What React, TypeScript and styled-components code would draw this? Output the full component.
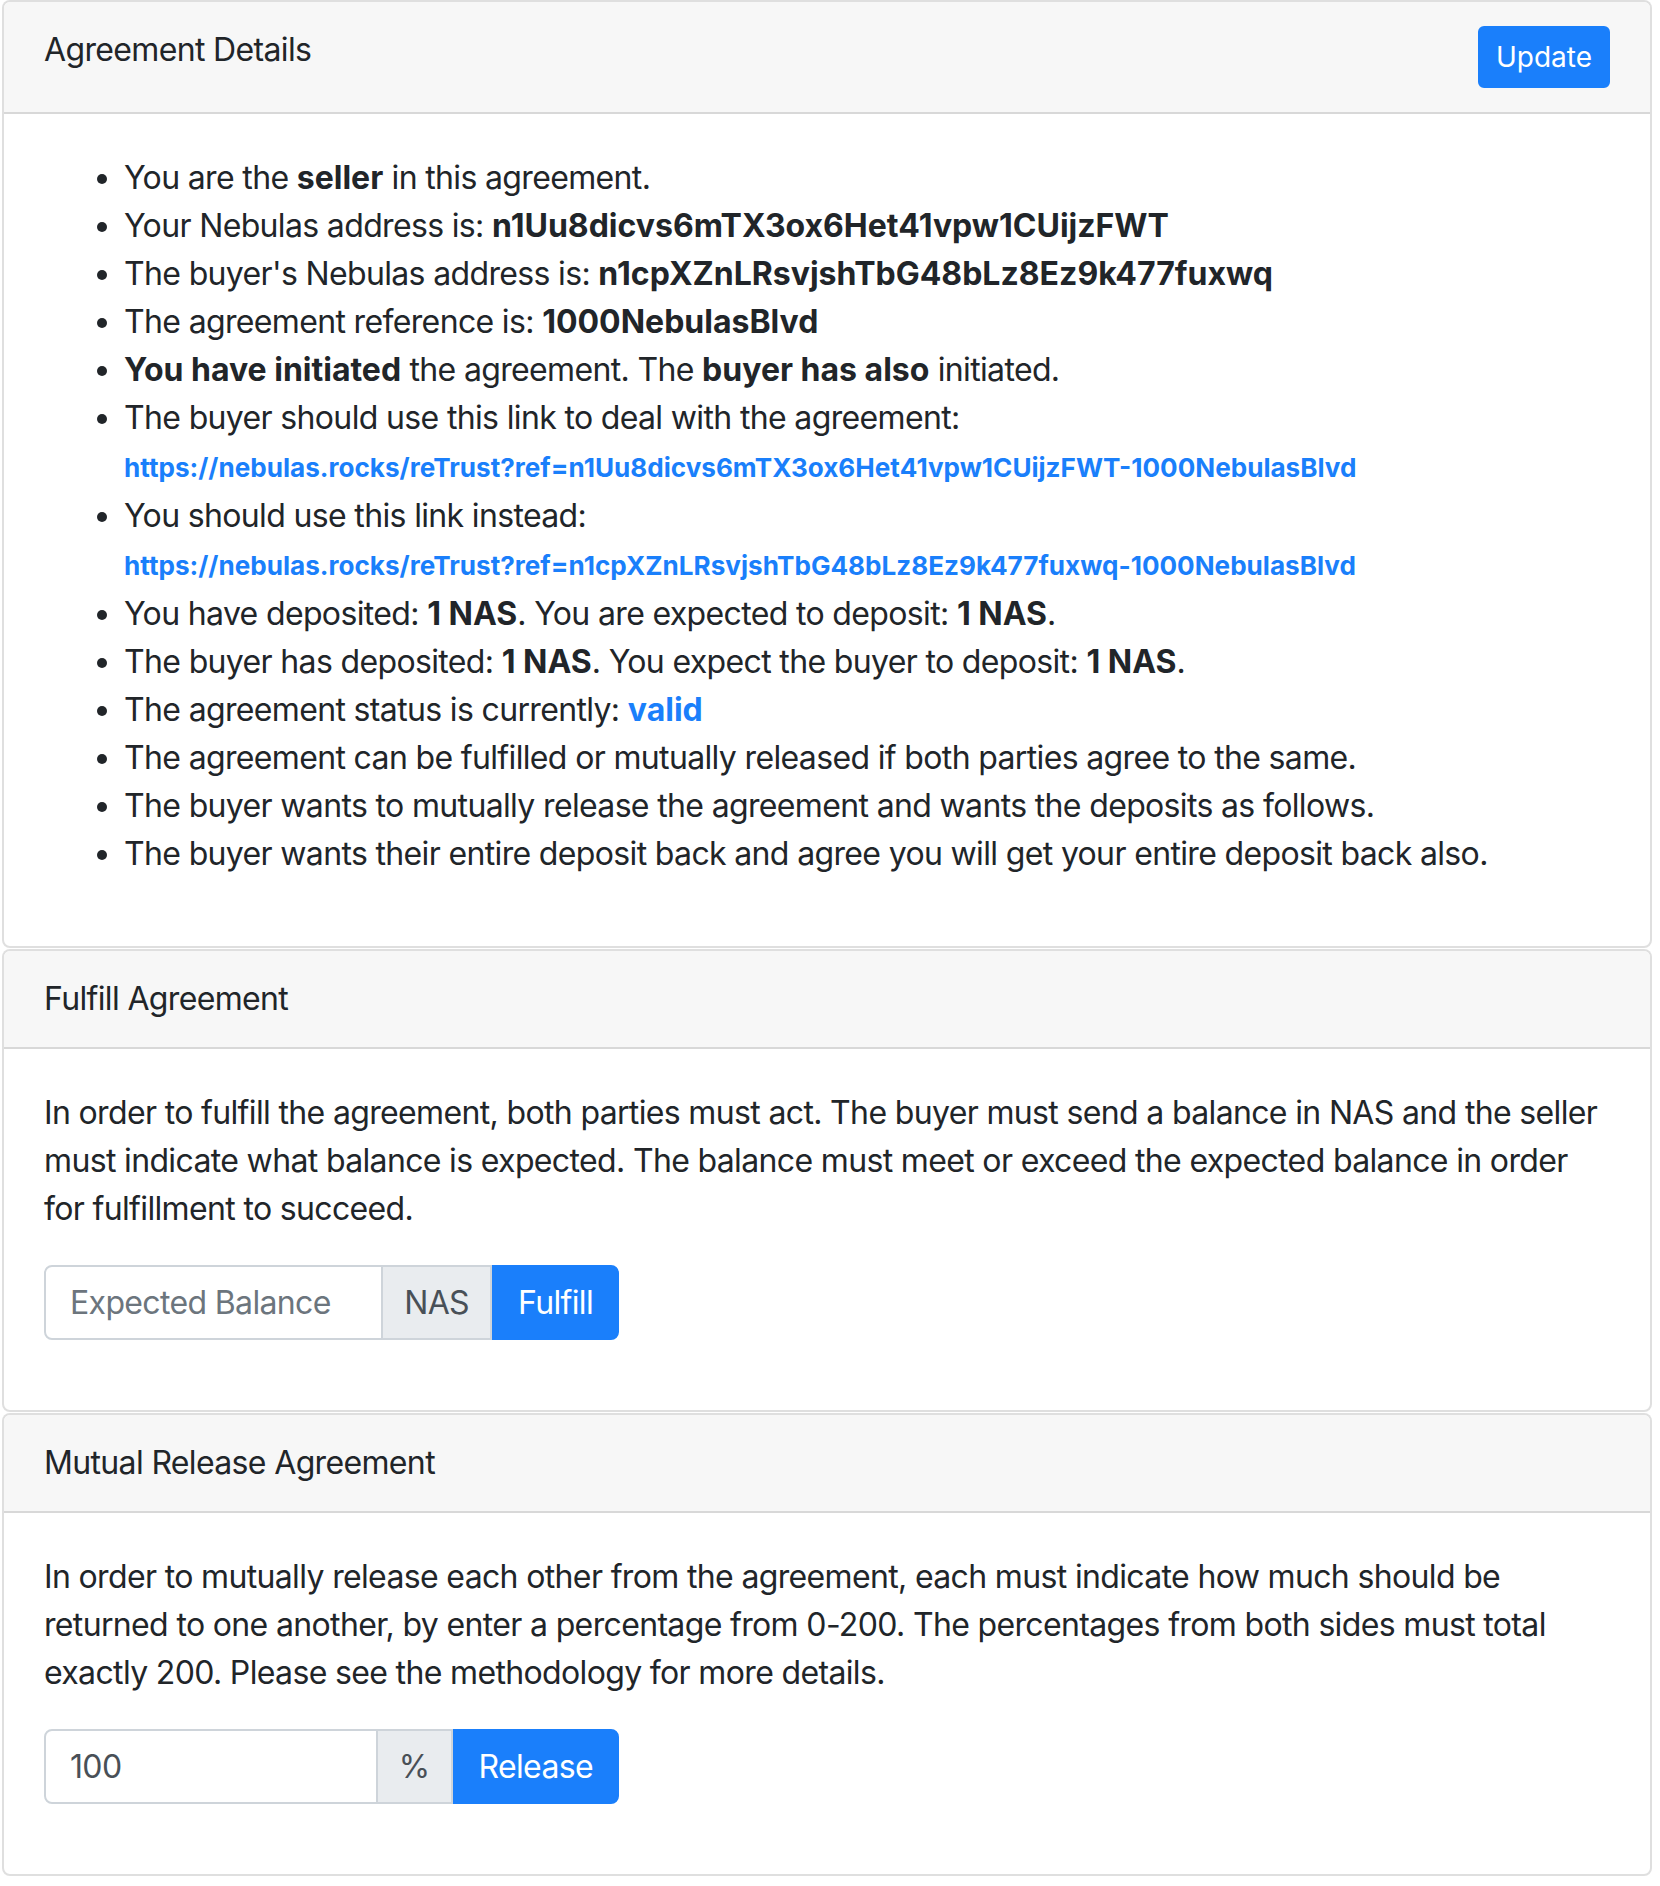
import React from 'react';
import styled, { createGlobalStyle } from 'styled-components';

const GlobalStyle = createGlobalStyle`
    body {
        margin: 0;
        background: #ffffff;
        font-family: Inter, "Liberation Sans", sans-serif;
        font-size: 32px;
        line-height: 48px;
        letter-spacing: -0.65px;
        color: #212529;
    }

    b {
        letter-spacing: 0;
    }
`;

const buyerLink = 'https://nebulas.rocks/reTrust?ref=n1Uu8dicvs6mTX3ox6Het41vpw1CUijzFWT-1000NebulasBlvd';
const sellerLink = 'https://nebulas.rocks/reTrust?ref=n1cpXZnLRsvjshTbG48bLz8Ez9k477fuxwq-1000NebulasBlvd';

const App: React.FC = () => {
    return (
        <Page>
            <GlobalStyle />
            <Card>
                <CardHeader>
                    <CardTitle>Agreement Details</CardTitle>
                    <SmallButton>Update</SmallButton>
                </CardHeader>
                <CardBody>
                    <DetailList>
                        <li>You are the <b>seller</b> in this agreement.</li>
                        <li>Your Nebulas address is: <b>n1Uu8dicvs6mTX3ox6Het41vpw1CUijzFWT</b></li>
                        <li>The buyer's Nebulas address is: <b>n1cpXZnLRsvjshTbG48bLz8Ez9k477fuxwq</b></li>
                        <li>The agreement reference is: <b>1000NebulasBlvd</b></li>
                        <li><b>You have initiated</b> the agreement. The <b>buyer has also</b> initiated.</li>
                        <li>
                            The buyer should use this link to deal with the agreement:
                            <br />
                            <SmallLink href="#">{buyerLink}</SmallLink>
                        </li>
                        <li>
                            You should use this link instead:
                            <br />
                            <SmallLink href="#">{sellerLink}</SmallLink>
                        </li>
                        <li>You have deposited: <b>1 NAS</b>. You are expected to deposit: <b>1 NAS</b>.</li>
                        <li>The buyer has deposited: <b>1 NAS</b>. You expect the buyer to deposit: <b>1 NAS</b>.</li>
                        <li>The agreement status is currently: <StatusText>valid</StatusText></li>
                        <li>The agreement can be fulfilled or mutually released if both parties agree to the same.</li>
                        <li>The buyer wants to mutually release the agreement and wants the deposits as follows.</li>
                        <li>The buyer wants their entire deposit back and agree you will get your entire deposit back also.</li>
                    </DetailList>
                </CardBody>
            </Card>

            <Card>
                <CardHeader>
                    <CardTitle>Fulfill Agreement</CardTitle>
                </CardHeader>
                <CardBody>
                    <Paragraph>
                        In order to fulfill the agreement, both parties must act. The buyer must send a balance in NAS and the seller
                        <br />
                        must indicate what balance is expected. The balance must meet or exceed the expected balance in order
                        <br />
                        for fulfillment to succeed.
                    </Paragraph>
                    <FormGroup>
                        <InputGroup>
                            <TextInput placeholder="Expected Balance" />
                            <Addon>NAS</Addon>
                            <GroupButton>Fulfill</GroupButton>
                        </InputGroup>
                    </FormGroup>
                </CardBody>
            </Card>

            <Card>
                <CardHeader>
                    <CardTitle>Mutual Release Agreement</CardTitle>
                </CardHeader>
                <CardBody>
                    <Paragraph>
                        In order to mutually release each other from the agreement, each must indicate how much should be
                        <br />
                        returned to one another, by enter a percentage from 0-200. The percentages from both sides must total
                        <br />
                        exactly 200. Please see the methodology for more details.
                    </Paragraph>
                    <FormGroup>
                        <InputGroup>
                            <TextInput defaultValue="100" />
                            <Addon>%</Addon>
                            <GroupButton>Release</GroupButton>
                        </InputGroup>
                    </FormGroup>
                </CardBody>
            </Card>
        </Page>
    );
};

export default App;

// Styled-components

const Page = styled.div`
    display: flex;
    flex-direction: column;
    gap: 1px;
    padding: 0 8px 0 2px;
`;

const Card = styled.section`
    display: flex;
    flex-direction: column;
    border: 2px solid rgba(0, 0, 0, 0.125);
    border-radius: 8px;
    background: #ffffff;
    overflow: hidden;
`;

const CardHeader = styled.div`
    display: flex;
    justify-content: space-between;
    align-items: flex-start;
    padding: 24px 40px;
    background: #f7f7f7;
    border-bottom: 2px solid rgba(0, 0, 0, 0.125);
`;

const CardTitle = styled.div`
    font-size: 32px;
    line-height: 48px;
`;

const SmallButton = styled.button`
    font-family: inherit;
    font-size: 28px;
    line-height: 42px;
    padding: 8px 16px;
    color: #ffffff;
    background: #1a7ffb;
    border: 2px solid #1a7ffb;
    border-radius: 6px;
`;

const CardBody = styled.div`
    padding: 40px;
`;

const DetailList = styled.ul`
    margin: 0 0 28px;
    padding-left: 80px;
`;

const SmallLink = styled.a`
    font-size: 26.1px;
    font-weight: 700;
    letter-spacing: 0;
    color: #1a7ffb;
    text-decoration: none;
`;

const StatusText = styled.b`
    color: #1a7ffb;
`;

const Paragraph = styled.p`
    margin: 0 0 32px;
    white-space: nowrap;
`;

const FormGroup = styled.div`
    margin-bottom: 30px;
`;

const InputGroup = styled.div`
    display: flex;
    align-items: stretch;
    width: 575px;
    height: 75px;
`;

const TextInput = styled.input`
    flex: 1;
    min-width: 0;
    font-family: inherit;
    font-size: 32px;
    line-height: 48px;
    letter-spacing: -0.65px;
    padding: 12px 24px;
    color: #495057;
    background: #ffffff;
    border: 2px solid #ced4da;
    border-radius: 8px 0 0 8px;
    outline: none;

    &::placeholder {
        color: #6c757d;
    }
`;

const Addon = styled.span`
    display: flex;
    align-items: center;
    padding: 12px 21px;
    font-size: 32px;
    color: #495057;
    background: #e9ecef;
    border: 2px solid #ced4da;
    border-left: none;
`;

const GroupButton = styled.button`
    font-family: inherit;
    font-size: 32px;
    line-height: 48px;
    letter-spacing: -0.65px;
    padding: 12px 24px;
    color: #ffffff;
    background: #1a7ffb;
    border: 2px solid #1a7ffb;
    border-radius: 0 8px 8px 0;
`;
